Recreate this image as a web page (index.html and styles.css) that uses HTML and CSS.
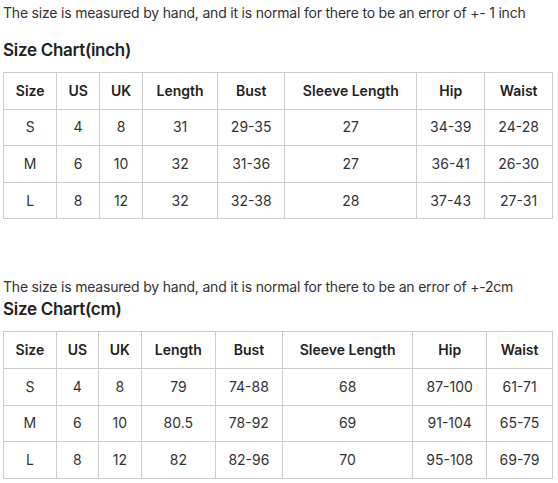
FILE: index.html
```html
<!DOCTYPE html>
<html>
<head>
<meta charset="utf-8">
<link rel="stylesheet" href="styles.css">
</head>
<body>
<div class="page">
  <p class="note first">The size is measured by hand, and it is normal for there to be an error of +- 1 inch</p>
  <h3 class="title first-title">Size Chart(inch)</h3>
  <table class="chart">
    <thead>
      <tr><th>Size</th><th>US</th><th>UK</th><th>Length</th><th>Bust</th><th>Sleeve Length</th><th>Hip</th><th>Waist</th></tr>
    </thead>
    <tbody>
      <tr><td>S</td><td>4</td><td>8</td><td>31</td><td>29-35</td><td>27</td><td>34-39</td><td>24-28</td></tr>
      <tr><td>M</td><td>6</td><td>10</td><td>32</td><td>31-36</td><td>27</td><td>36-41</td><td>26-30</td></tr>
      <tr><td>L</td><td>8</td><td>12</td><td>32</td><td>32-38</td><td>28</td><td>37-43</td><td>27-31</td></tr>
    </tbody>
  </table>

  <p class="note second">The size is measured by hand, and it is normal for there to be an error of +-2cm</p>
  <h3 class="title">Size Chart(cm)</h3>
  <table class="chart">
    <thead>
      <tr><th>Size</th><th>US</th><th>UK</th><th>Length</th><th>Bust</th><th>Sleeve Length</th><th>Hip</th><th>Waist</th></tr>
    </thead>
    <tbody>
      <tr><td>S</td><td>4</td><td>8</td><td>79</td><td>74-88</td><td>68</td><td>87-100</td><td>61-71</td></tr>
      <tr><td>M</td><td>6</td><td>10</td><td>80.5</td><td>78-92</td><td>69</td><td>91-104</td><td>65-75</td></tr>
      <tr><td>L</td><td>8</td><td>12</td><td>82</td><td>82-96</td><td>70</td><td>95-108</td><td>69-79</td></tr>
    </tbody>
  </table>
</div>
</body>
</html>
```

FILE: styles.css
```css
html, body {
  margin: 0;
  padding: 0;
  background: #fff;
}

body {
  font-family: Inter, "Noto Sans", sans-serif;
  color: #333;
  font-size: 14px;
}

.page {
  padding: 0 3px;
}

.note {
  margin: 0;
  line-height: 20px;
  font-size: 14px;
  letter-spacing: -0.2px;
  color: #333;
}

.note.first {
  margin-top: 3px;
}

.note.second {
  margin-top: 58px;
}

.title {
  margin: 0 0 10px;
  font-size: 17px;
  line-height: 24px;
  font-weight: 600;
  letter-spacing: -0.3px;
  color: #222;
}

.title.first-title {
  margin-top: 15px;
}

.chart {
  width: 550px;
  border-collapse: collapse;
  border: 1px solid #ccc;
}

.chart th,
.chart td {
  border: 1px solid #ccc;
  text-align: center;
  height: 36.6px;
  padding: 0 8px;
  box-sizing: border-box;
  font-size: 14px;
  line-height: 18px;
  color: #333;
}

.chart th {
  font-weight: 600;
  color: #222;
}
```
